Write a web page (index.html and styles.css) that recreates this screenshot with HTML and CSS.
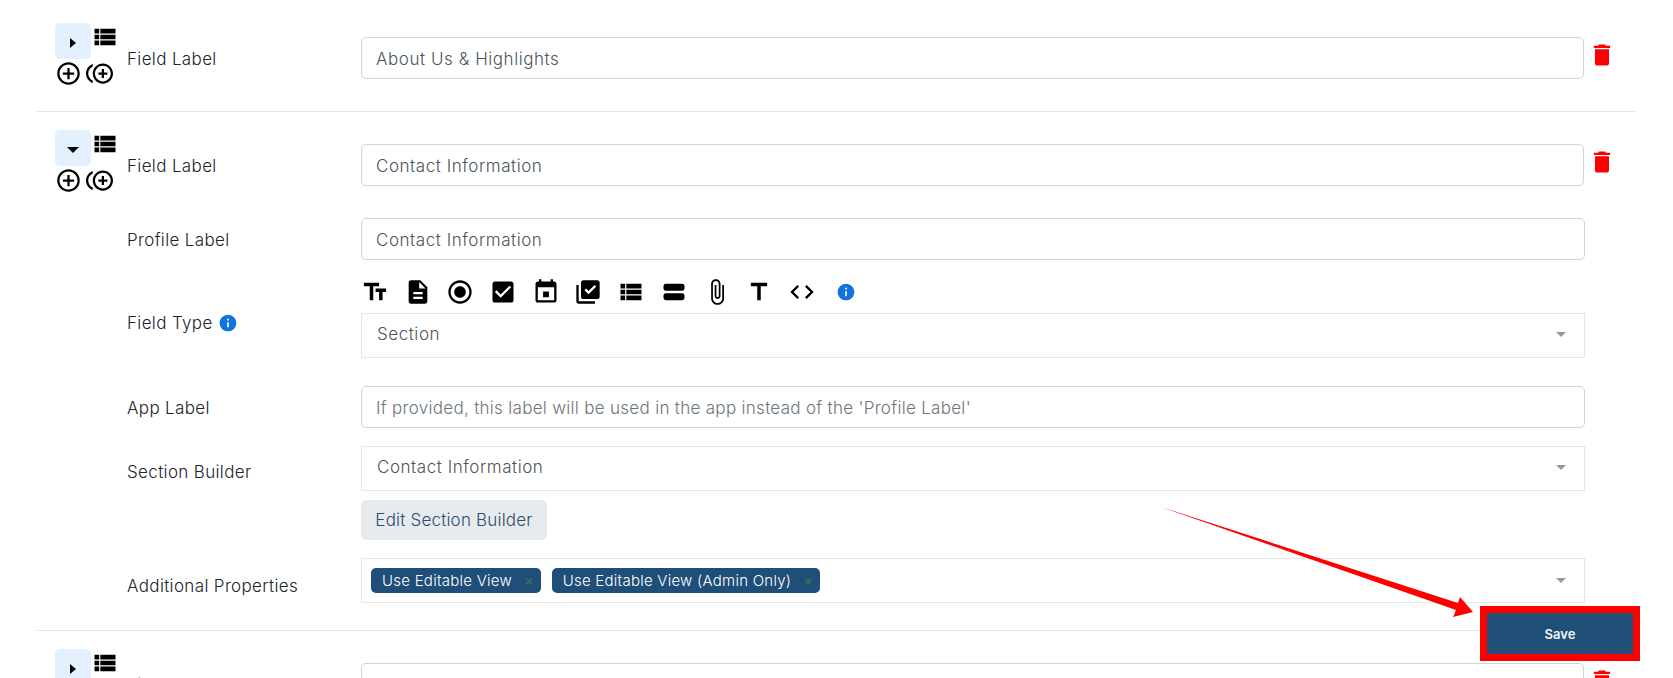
FILE: index.html
```html
<!DOCTYPE html>
<html>
  <head>
    <title>Field Builder</title>
    <link rel="stylesheet" href="styles.css">
  </head>
  <body>
    <svg class="sprites" width="0" height="0">
      <symbol id="i-list" viewBox="0 0 24 24"><path d="M3 14h4v-4H3v4zm0 5h4v-4H3v4zM3 9h4V5H3v4zm5 5h13v-4H8v4zm0 5h13v-4H8v4zM8 5v4h13V5H8z"/></symbol>
      <symbol id="i-add" viewBox="0 0 24 24"><path d="M13 7h-2v4H7v2h4v4h2v-4h4v-2h-4V7zm-1-5C6.48 2 2 6.48 2 12s4.48 10 10 10 10-4.48 10-10S17.52 2 12 2zm0 18c-4.41 0-8-3.59-8-8s3.59-8 8-8 8 3.59 8 8-3.59 8-8 8z"/></symbol>
      <symbol id="i-dup" viewBox="0 0 24 24"><path d="M16 8h-2v3h-3v2h3v3h2v-3h3v-2h-3zM2 12c0-2.79 1.64-5.2 4.01-6.32V3.52C2.52 4.76 0 8.09 0 12s2.52 7.24 6.01 8.48v-2.16C3.64 17.2 2 14.79 2 12zm13-9c-4.96 0-9 4.04-9 9s4.04 9 9 9 9-4.04 9-9-4.04-9-9-9zm0 16c-3.86 0-7-3.14-7-7s3.14-7 7-7 7 3.14 7 7-3.14 7-7 7z"/></symbol>
      <symbol id="i-trash" viewBox="0 0 24 24"><path d="M6 19c0 1.1.9 2 2 2h8c1.1 0 2-.9 2-2V7H6v12zM19 4h-3.5l-1-1h-5l-1 1H5v2h14V4z"/></symbol>
      <symbol id="i-info" viewBox="0 0 24 24"><path d="M12 2C6.48 2 2 6.48 2 12s4.48 10 10 10 10-4.48 10-10S17.52 2 12 2zm1 15h-2v-6h2v6zm0-8h-2V7h2v2z"/></symbol>
    </svg>

    <div class="field-list">

      <div class="field-row">
        <div class="row-tools">
          <div class="tools-top">
            <button class="handle"><span class="caret-right"></span></button>
            <svg class="tool-icon list-icon"><use href="#i-list"/></svg>
          </div>
          <div class="tools-bottom">
            <svg class="tool-icon"><use href="#i-add"/></svg>
            <svg class="tool-icon"><use href="#i-dup"/></svg>
          </div>
        </div>
        <div class="row-body">
          <div class="form-line">
            <label class="field-label">Field Label</label>
            <div class="field-control"><input class="text-input" value="About Us &amp; Highlights"></div>
            <svg class="trash-icon"><use href="#i-trash"/></svg>
          </div>
        </div>
      </div>

      <div class="field-row">
        <div class="row-tools">
          <div class="tools-top">
            <button class="handle"><span class="caret-down"></span></button>
            <svg class="tool-icon list-icon"><use href="#i-list"/></svg>
          </div>
          <div class="tools-bottom">
            <svg class="tool-icon"><use href="#i-add"/></svg>
            <svg class="tool-icon"><use href="#i-dup"/></svg>
          </div>
        </div>
        <div class="row-body">
          <div class="form-line">
            <label class="field-label">Field Label</label>
            <div class="field-control"><input class="text-input" value="Contact Information"></div>
            <svg class="trash-icon"><use href="#i-trash"/></svg>
          </div>
          <div class="form-line line-profile">
            <label class="field-label">Profile Label</label>
            <div class="field-control"><input class="text-input" value="Contact Information"></div>
            <span class="trash-space"></span>
          </div>
          <div class="form-line line-type">
            <label class="field-label">Field Type
              <svg class="label-info"><use href="#i-info"/></svg>
            </label>
            <div class="field-control">
              <div class="type-icons">
                <svg viewBox="0 0 24 24"><path d="M2.5 4v3h5v12h3V7h5V4h-13zm19 5h-9v3h3v7h3v-7h3V9z"/></svg>
                <svg viewBox="0 0 24 24"><path d="M14 2H6c-1.1 0-1.99.9-1.99 2L4 20c0 1.1.89 2 1.99 2H18c1.1 0 2-.9 2-2V8l-6-6zm2 16H8v-2h8v2zm0-4H8v-2h8v2zm-3-5V3.5L18.5 9H13z"/></svg>
                <svg viewBox="0 0 24 24"><path d="M12 7c-2.76 0-5 2.24-5 5s2.24 5 5 5 5-2.24 5-5-2.24-5-5-5zm0-5C6.48 2 2 6.48 2 12s4.48 10 10 10 10-4.48 10-10S17.52 2 12 2zm0 18c-4.42 0-8-3.58-8-8s3.58-8 8-8 8 3.58 8 8-3.58 8-8 8z"/></svg>
                <svg viewBox="0 0 24 24"><path d="M19 3H5c-1.11 0-2 .9-2 2v14c0 1.1.89 2 2 2h14c1.11 0 2-.9 2-2V5c0-1.1-.89-2-2-2zm-9 14l-5-5 1.41-1.41L10 14.17l7.59-7.59L19 8l-9 9z"/></svg>
                <svg viewBox="0 0 24 24"><path d="M14.5 11.5h-5v5h5v-5zM16 1v2H8V1H6v2H5c-1.11 0-1.99.9-1.99 2L3 19c0 1.1.89 2 2 2h14c1.1 0 2-.9 2-2V5c0-1.1-.9-2-2-2h-1V1h-2zm3 18H5V8h14v11z"/></svg>
                <svg viewBox="0 0 24 24"><path d="M20 2H8c-1.1 0-2 .9-2 2v12c0 1.1.9 2 2 2h12c1.1 0 2-.9 2-2V4c0-1.1-.9-2-2-2zm-7.53 12L9 10.5l1.4-1.41 2.07 2.08L17.6 6 19 7.41 12.47 14zM4 6H2v14c0 1.1.9 2 2 2h14v-2H4V6z"/></svg>
                <svg viewBox="0 0 24 24"><path d="M3 14h4v-4H3v4zm0 5h4v-4H3v4zM3 9h4V5H3v4zm5 5h13v-4H8v4zm0 5h13v-4H8v4zM8 5v4h13V5H8z"/></svg>
                <svg viewBox="0 0 24 24"><rect x="3" y="5" width="18" height="6" rx="2"/><rect x="3" y="13" width="18" height="6" rx="2"/></svg>
                <svg viewBox="0 0 24 24"><path d="M16.5 6v11.5c0 2.21-1.79 4-4 4s-4-1.79-4-4V5c0-1.38 1.12-2.5 2.5-2.5s2.5 1.12 2.5 2.5v10.5c0 .55-.45 1-1 1s-1-.45-1-1V6H10v9.5c0 1.38 1.12 2.5 2.5 2.5s2.5-1.12 2.5-2.5V5c0-2.21-1.79-4-4-4S7 2.79 7 5v12.5c0 3.04 2.46 5.5 5.5 5.5s5.5-2.46 5.5-5.5V6h-1.5z"/></svg>
                <svg viewBox="0 0 24 24"><path d="M5 4v3h5.5v12h3V7H19V4z"/></svg>
                <svg viewBox="0 0 24 24"><path d="M9.4 16.6L4.8 12l4.6-4.6L8 6l-6 6 6 6 1.4-1.4zm5.2 0l4.6-4.6-4.6-4.6L16 6l6 6-6 6-1.4-1.4z"/></svg>
                <svg class="type-info"><use href="#i-info"/></svg>
              </div>
              <div class="select-box"><span class="select-value">Section</span><span class="select-caret"></span></div>
            </div>
            <span class="trash-space"></span>
          </div>
          <div class="form-line line-app">
            <label class="field-label">App Label</label>
            <div class="field-control"><input class="text-input" placeholder="If provided, this label will be used in the app instead of the 'Profile Label'"></div>
            <span class="trash-space"></span>
          </div>
          <div class="form-line line-builder">
            <label class="field-label">Section Builder</label>
            <div class="field-control">
              <div class="select-box"><span class="select-value">Contact Information</span><span class="select-caret"></span></div>
              <button class="edit-btn">Edit Section Builder</button>
            </div>
            <span class="trash-space"></span>
          </div>
          <div class="form-line line-props">
            <label class="field-label">Additional Properties</label>
            <div class="field-control">
              <div class="select-box props-box">
                <span class="chip">Use Editable View<i class="chip-x">×</i></span>
                <span class="chip">Use Editable View (Admin Only)<i class="chip-x">×</i></span>
                <span class="select-caret"></span>
              </div>
            </div>
            <span class="trash-space"></span>
          </div>
        </div>
      </div>

      <div class="field-row">
        <div class="row-tools">
          <div class="tools-top">
            <button class="handle"><span class="caret-right"></span></button>
            <svg class="tool-icon list-icon"><use href="#i-list"/></svg>
          </div>
        </div>
        <div class="row-body">
          <div class="form-line">
            <label class="field-label">Field Label</label>
            <div class="field-control"><input class="text-input"></div>
            <svg class="trash-icon"><use href="#i-trash"/></svg>
          </div>
        </div>
      </div>

    </div>

    <!-- screenshot annotation -->
    <svg class="arrow-mark" width="1673" height="678">
      <defs>
        <linearGradient id="arrow-fade" x1="0" x2="1" y1="0" y2="0">
          <stop offset="0" stop-color="#ff0000" stop-opacity="0.5"/>
          <stop offset="0.04" stop-color="#ff0000"/>
        </linearGradient>
      </defs>
      <polygon fill="url(#arrow-fade)" points="1158,506 1458,603 1460,597 1473,612 1453,617 1456,610"/>
    </svg>
    <div class="save-mark"><button class="save-btn">Save</button></div>
  </body>
</html>
```

FILE: styles.css
```css
html, body {
  margin: 0px;
  padding: 0px;
  height: 678px;
  overflow: hidden;
  background: #fff;
}

body {
  font-family: "Inter", "Noto Sans", sans-serif;
  font-size: 17px;
  font-weight: 300;
  color: #212529;
  position: relative;
}

.sprites { display: block; height: 0; }

.field-list { padding: 18px 37px 0 37px; }

.field-row {
  display: flex;
  padding-top: 1px;
  padding-bottom: 27px;
  border-bottom: 1px solid #e4e4e4;
}
.field-row + .field-row { padding-top: 18px; }
.field-row:first-child { padding-top: 5px; padding-bottom: 24px; }
.field-row:last-child { border-bottom: 0; }

/* handle column */
.row-tools { width: 90px; padding-left: 18px; box-sizing: border-box; flex: none; }
.tools-top { display: flex; gap: 0px; }
.tools-bottom { display: flex; gap: 4px; margin-top: 1px; }

.handle {
  width: 36px;
  height: 36px;
  border: 0;
  padding: 0;
  border-radius: 5px;
  background: #e3f0fd;
  display: flex;
  align-items: center;
  justify-content: center;
}
.caret-right {
  margin-top: 3px;
  border-left: 6px solid #000;
  border-top: 5px solid transparent;
  border-bottom: 5px solid transparent;
}
.caret-down {
  margin-top: 3px;
  border-top: 6px solid #000;
  border-left: 6px solid transparent;
  border-right: 6px solid transparent;
}
.tool-icon { width: 27px; height: 27px; display: block; fill: #000; }
.list-icon { width: 28px; height: 28px; }

/* form */
.row-body { flex: 1; padding-top: 14px; min-width: 0; }
.form-line { display: flex; align-items: center; }
.field-label { width: 234px; flex: none; padding-top: 2px; font-size: 17px; letter-spacing: 0.35px; }
.field-control { flex: 1; min-width: 0; }
.trash-icon { width: 28px; height: 28px; fill: #ff0000; flex: none; margin: -6px 20px 0 4px; }
.trash-space { width: 51px; flex: none; }

.text-input {
  display: block;
  width: 100%;
  height: 42px;
  box-sizing: border-box;
  padding: 2px 14px 0;
  border: 1px solid #ced4da;
  border-radius: 5px;
  font-family: inherit;
  font-weight: 300;
  font-size: 17px;
  letter-spacing: 0.55px;
  color: #4a5560;
  background: #fff;
}
.text-input::placeholder { color: #6c757d; opacity: 1; letter-spacing: 0.3px; }

.line-profile { margin-top: 32px; }
.line-type { margin-top: 17px; }
.line-app { margin-top: 28px; }
.line-builder { margin-top: 18px; align-items: flex-start; }
.line-builder .field-label { padding-top: 16px; }
.line-props { margin-top: 18px; }
.line-props .field-label { padding-top: 10px; }

.type-icons { display: flex; align-items: center; gap: 14.7px; height: 28px; margin-top: 1px; margin-bottom: 7px; }
.type-icons svg { width: 28px; height: 28px; flex: none; fill: #000; }
.type-icons .type-info { width: 20px; height: 20px; fill: #1273de; margin-left: 5px; }
.line-type .field-label { padding-top: 10px; }
.label-info { width: 20px; height: 20px; fill: #1273de; vertical-align: -4px; }

.select-box {
  display: flex;
  align-items: center;
  height: 45px;
  box-sizing: border-box;
  padding: 0 18px 0 15px;
  border: 1px solid #e6e6e6;
  font-size: 17px;
  letter-spacing: 0.55px;
  color: #4a5560;
}
.select-value { flex: 1; margin-bottom: 3px; }
.select-caret {
  margin-left: auto;
  border-top: 5px solid #999;
  border-left: 5px solid transparent;
  border-right: 5px solid transparent;
}
.select-value + .select-caret { margin-bottom: 2px; }
.props-box { padding-left: 9px; gap: 11px; }
.chip {
  display: flex;
  align-items: center;
  height: 25px;
  padding: 0 7px 0 11px;
  border-radius: 5px;
  background: #1f4e79;
  color: #fff;
  font-size: 15px;
  letter-spacing: 0.25px;
}
.chip-x { font-style: normal; color: #2f6f57; margin-left: 12px; font-size: 14px; font-weight: bold; }

.edit-btn {
  display: block;
  margin-top: 9px;
  height: 40px;
  width: 186px;
  border: 0;
  border-radius: 5px;
  background: #e8ebee;
  font-family: inherit;
  font-weight: 300;
  font-size: 17px;
  letter-spacing: 0.2px;
  color: #2c4d70;
}

/* annotation over the page */
.arrow-mark { position: absolute; left: 0; top: 0; pointer-events: none; }
.save-mark {
  position: absolute;
  left: 1480px;
  top: 606px;
  width: 160px;
  height: 55px;
  box-sizing: border-box;
  border: 7px solid #ff0000;
}
.save-btn {
  display: block;
  width: 100%;
  height: 100%;
  border: 0;
  background: #205078;
  color: #f2f5f8;
  font-family: inherit;
  font-size: 13px;
  font-weight: 600;
}
```
